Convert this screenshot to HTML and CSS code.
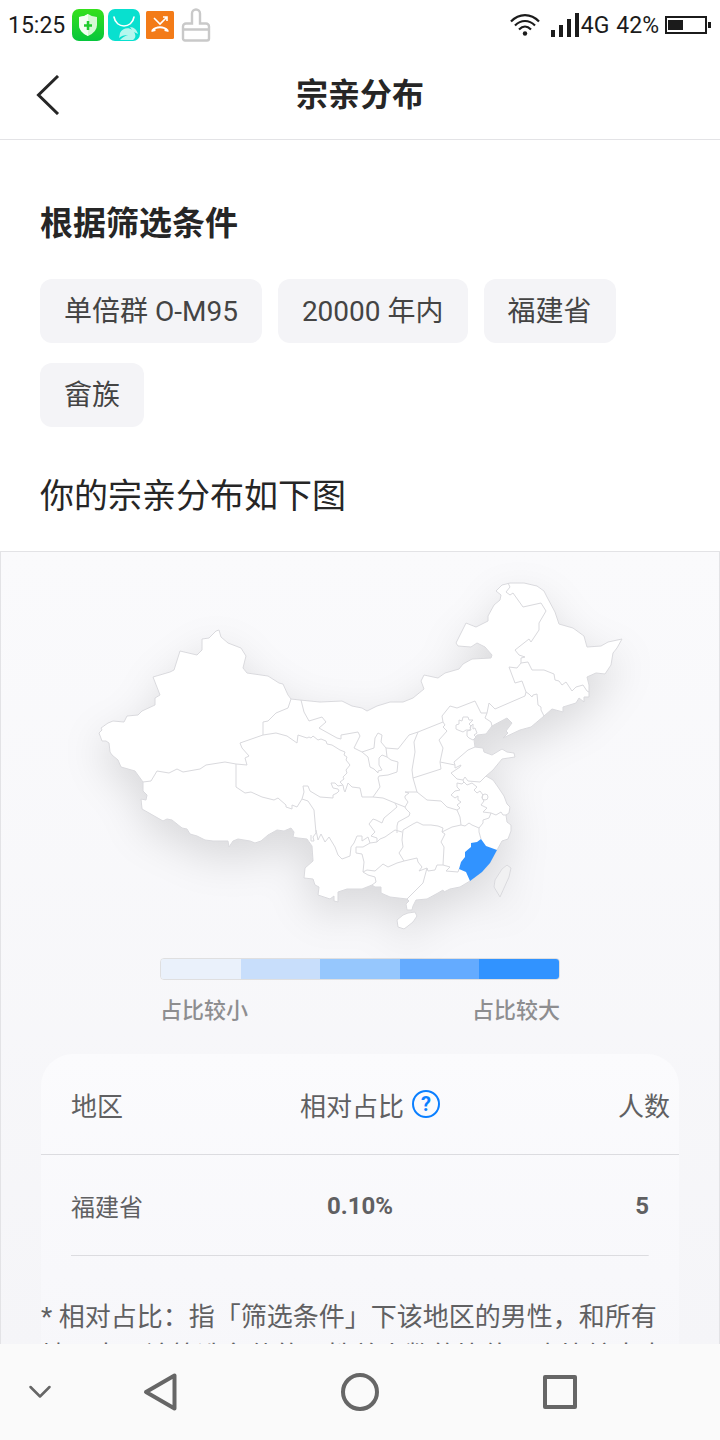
FILE: index.html
```
<!DOCTYPE html>
<html lang="zh-CN">
<head>
  <meta charset="UTF-8" />
  <meta name="viewport" content="width=device-width, initial-scale=1.0" />
  <title>宗亲分布</title>
  <link rel="stylesheet" href="styles.css">
</head>
<body>
  <div class="app">
    <div class="status-bar">
      <div class="status-group">
        <span class="status-time">15:25</span>
        <svg width="32" height="32" viewBox="0 0 32 32">
          <defs>
            <linearGradient id="green" x1="0" y1="0" x2="0" y2="1">
              <stop offset="0" stop-color="#35e01c" />
              <stop offset="1" stop-color="#06c63c" />
            </linearGradient>
          </defs>
          <rect width="32" height="32" rx="7" fill="url(#green)" />
          <path d="M7 8q5 0 9-3q4 3 9 3v8q0 7-9 11q-9-4-9-11z" fill="#d5f8d4" />
          <path d="M7 8q5 0 9-3v22q-9-4-9-11z" fill="#f4fff3" />
          <path d="M16 12v9M12 16.500h8" stroke="#1fcb2c" stroke-width="2.500" />
        </svg>
        <svg width="32" height="32" viewBox="0 0 32 32">
          <rect width="32" height="32" rx="7" fill="#08e0cf" />
          <path d="M6 8c2 12 18 12 20 0" fill="none" stroke="#fff" stroke-width="1.600" stroke-linecap="round" />
          <path d="M12 24c2-5 9-6 12-3l-2-3c4 0 7 3 8 7l-4-2c2 3 2 6-1 8H12c3-3 5-4 8-5c-4 0-7 1-9 3z" fill="#b5f7ee" />
        </svg>
        <svg width="32" height="32" viewBox="0 0 32 32">
          <rect x="2" y="2" width="28" height="28" rx="1.500" fill="#f37b18" />
          <path d="M10 9l6 6l7-7M19 8h4v4" fill="none" stroke="#fff" stroke-width="1.600" />
          <path d="M7.500 21c4-5 13-5 17 0v2l-4-1v-2c-3-1-6-1-9 0v2l-4 1z" fill="#fff" />
        </svg>
        <svg width="32" height="34" viewBox="0 0 32 34" fill="none" stroke="#c9c9c9" stroke-width="2.400">
          <path d="M12 15.500V5.500a4 4 0 0 1 8 0v10h6a3 3 0 0 1 3 3v12a2 2 0 0 1-2 2H5a2 2 0 0 1-2-2v-12a3 3 0 0 1 3-3zM3 21.500h26" />
        </svg>
      </div>
      <div class="status-group">
        <svg class="wifi" width="30" height="24" viewBox="0 0 30 24" fill="none" stroke="#1b1b1b" stroke-width="2.200">
          <path d="M1 8.500c8-8.500 20-8.500 28 0M5 12.500c6-6 14-6 20 0M9 16.500c4-4 8-4 12 0" />
          <circle cx="15" cy="20.500" r="2.200" fill="#1b1b1b" stroke="none" />
        </svg>
        <svg width="28" height="24" viewBox="0 0 28 24" fill="#1b1b1b">
          <path d="M0 17h4v7H0zM8 12h4v12H8zM16 6h4v18h-4zM24 0h4v24h-4z" />
        </svg>
        <span class="status-net">4G</span>
        <span class="status-percent">42%</span>
        <svg width="46" height="18" viewBox="0 0 46 18" fill="#1b1b1b">
          <rect x="1" y="1" width="40" height="16" fill="none" stroke="#1b1b1b" stroke-width="2" />
          <rect x="3" y="4" width="15" height="10" />
          <rect x="43" y="6" width="3" height="6" />
        </svg>
      </div>
    </div>

    <header class="header">
      <button class="back" type="button" aria-label="返回">
        <svg width="24" height="40" viewBox="0 0 24 40" fill="none" stroke="#262626" stroke-width="3">
          <path d="M22 1L2.500 20l19.500 19" />
        </svg>
      </button>
      <h1>宗亲分布</h1>
    </header>

    <main class="content">
      <section class="filters">
        <h2>根据筛选条件</h2>
        <ul class="chips">
          <li>单倍群 O-M95</li>
          <li>20000 年内</li>
          <li>福建省</li>
          <li>畲族</li>
        </ul>
        <p class="lead">你的宗亲分布如下图</p>
      </section>

      <section class="result">
        <svg class="map" viewBox="1 552 718 388" role="img" aria-label="宗亲分布地图">
          <g class="land">
            <!-- mainland -->
            <path d="M291 699L288 695 283 684 279 683 268 676 247 673 243 668 246 656 241 648 228 643 221 637 219 630 216 631 209 638 202 639 202 650 197 655 180 651 174 670 170 672 153 677 160 695 155 698 155 705 142 711 138 715 127 716 124 722 113 721 108 723 101 728 102 730 99 733 102 741 106 741 109 743 110 752 112 755 118 760 121 767 135 771 143 782 143 791 147 795 146 800 141 799 142 809 163 821 167 819 172 820 182 828 187 829 190 834 197 836 205 840 213 841 228 841 229 847 233 841 238 839 250 841 255 843 261 841 268 835 277 830 284 831 291 828 294 832 293 837 298 838 307 839 312 846 313 861 305 868 304 878 313 879 315 885 319 887 318 895 330 899 334 896 334 901 338 902 338 892 347 889 362 889 372 885 375 887 381 887 381 893 390 897 407 899 409 901 406 904 407 910 412 910 413 906 416 900 427 899 438 893 443 890 444 892 450 889 460 887 470 881 482 872 490 863 497 850 502 841 508 839 511 831 511 825 507 822 506 815 509 813 510 807 507 804 504 796 498 787 493 780 486 776 493 770 502 759 515 757 514 753 507 752 502 749 492 755 484 752 483 748 475 747 474 740 477 735 486 734 492 726 507 718 512 723 506 731 508 733 503 738 520 730 531 727 544 716 552 709 563 712 563 707 576 703 579 698 584 702 584 697 589 697 589 685 587 677 596 673 605 674 611 665 613 653 617 648 622 639 608 642 601 646 587 647 584 636 573 628 559 624 555 612 547 597 544 591 537 586 524 583 510 583 502 585 496 591 501 595 500 600 494 605 488 616 488 621 476 627 466 623 456 643 458 646 471 647 477 643 485 647 492 655 491 658 472 659 463 664 459 669 445 673 438 678 424 675 421 681 424 689 413 698 403 702 390 702 377 706 367 711 362 708 352 706 342 701 320 702 300 700z" />
            <!-- hainan, taiwan -->
            <path d="M415 912L417 916 413 922 408 926 404 929 398 927 397 920 403 915 408 913z" />
            <path class="empty" d="M507 865L511 868 509 877 500 897 494 887 495 880 502 869z" />
          </g>
          <g class="borders">
            <path d="M291 699L288 708 276 713 268 721 263 722 263 735 240 743 242 748 249 756 245 758 247 765 236 764 225 762 206 765 200 769 183 772 177 769 169 773 157 771 151 781 143 782" />
            <path d="M236 764L236 787 245 793 251 792 262 797 274 800 278 798 286 805 286 807 292 809 292 805 297 807 302 799" />
            <path d="M263 735L276 733 287 736 297 743 298 735 307 738 309 737 311 738 313 736 318 740 321 739 326 741 327 744 332 745 340 750 345 752 344 755 347 757 346 760 350 765 346 770 347 773 343 777 344 779 340 782 343 785 338 786 335 783 331 783 333 788 338 789 339 791 337 793 333 795 333 798 320 797 310 791 308 786 303 786 304 792 302 799 308 801 314 810 316 833 313 837 314 841 311 841 311 835" />
            <path d="M316 830L318 840 321 834 325 842 329 837 335 847 338 855 342 859 350 856 351 847 354 843 357 836 362 836 362 841 368 837 370 843 377 842 377 838 371 836 375 832 369 824 373 819 376 820 382 823 384 818 390 813 397 807 395 803 405 807 406 809 410 813 409 816 398 822 397 826 397 833" />
            <path d="M370 843L363 847 356 847 356 853 362 854 364 862 363 872 368 875 375 877 376 882 372 885" />
            <path d="M363 872L367 870 375 871 383 864 388 867 397 863 404 861 399 853 403 847 402 840 403 830 413 824 417 822 423 825 431 825 438 826 443 828 442 832 445 834 441 842 444 847 443 865" />
            <path d="M377 842L380 839 385 837 395 830 402 832" />
            <path d="M404 861L417 858 418 862 422 867 419 871 427 868 428 871 435 870 437 865 443 865 450 867 446 871 458 872 459 869" />
            <path d="M427 868L423 883 413 893 407 899" />
            <path d="M405 807L408 802 405 798 405 796 409 793 405 792 417 792 427 800 441 801 447 807 457 810 460 817 461 825" />
            <path d="M442 832L452 827 461 825 465 826 469 823 472 825 479 828" />
            <path d="M481 839L479 832 479 828 483 823 483 820 489 818 491 813 496 815 501 812 503 815 506 815" />
            <path d="M457 810L460 808 457 805 461 802 458 800 458 796 455 798 451 795 455 791 460 790 457 787 457 783 462 784 464 782 467 785 472 783 477 787 474 790 477 793 480 791 483 795 482 798 484 801 481 805 487 808 483 812 491 813" />
            <circle cx="485" cy="797" r="3" />
            <path d="M457 779L451 773 460 767 461 765 455 768 455 765 454 762 468 750 475 747" />
            <path d="M457 779L463 780 465 777 468 781 480 782 486 776M463 780L464 783" />
            <path d="M443 722L445 725 443 727 447 731 439 740 443 748 440 762 455 765M440 762L441 769 413 778" />
            <path d="M418 732L414 742 415 752 412 770 413 778 417 792" />
            <path d="M301 700L304 712 309 721 322 717 326 722 319 728 337 738 341 739 341 735 358 732 360 736 354 748 362 752 374 748 375 738 378 733 382 735 381 742 386 748 398 749 409 735 418 732 443 722 442 716 450 706 457 708 475 701 481 713 487 713 489 703 495 709 525 696 526 692 522 681 515 683 509 667 517 668 521 663 521 658 525 657 519 655 515 650 529 639 531 642 539 630 539 623 546 611 541 603 523 607 513 593 510 595 506 592 510 587 508 583" />
            <path d="M362 752L368 757 370 767 374 769 378 773 378 771 382 770 379 765 379 758 382 755 387 757 386 748M387 757L391 760 398 762 397 772 388 775 379 776 378 778 380 787 373 797" />
            <path d="M340 782L343 785 344 790 345 792 348 783 352 787 360 788 362 797 373 797 383 798 395 803" />
            <path d="M487 713L485 718 491 722 492 726" />
            <path d="M521 663L528 662 532 670 544 670 554 674 555 680 559 681 562 685 566 682 572 691 576 687 583 685 587 691 589 692" />
            <path d="M526 692L529 694 532 697 533 695 537 694 538 705 541 707 541 710 544 716" />
            <path d="M456 725L459 724 459 720 462 721 463 717 468 717 469 720 473 720 469 724 471 726 470 730 466 730 463 732 458 730 456 729z" />
            <path d="M467 731L471 730 470 727 473 724 473 729 475 728 477 733 474 735 476 737 473 740 469 738 467 736z" />
          </g>
          <path class="active" d="M481 839L486 846 497 850 490 863 482 872 470 881 466 872 459 869 461 862 465 857 465 852 471 847 471 843 477 842z" />
        </svg>

        <div class="legend">
          <div class="legend-bar">
            <span></span><span></span><span></span><span></span><span></span>
          </div>
          <div class="legend-labels">
            <span>占比较小</span>
            <span>占比较大</span>
          </div>
        </div>

        <div class="card">
          <table>
            <thead>
              <tr>
                <th>地区</th>
                <th>
                  <div class="ratio">
                    相对占比
                    <button class="help" type="button" aria-label="说明">?</button>
                  </div>
                </th>
                <th>人数</th>
              </tr>
            </thead>
            <tbody>
              <tr>
                <td>福建省</td>
                <td>0.10%</td>
                <td>5</td>
              </tr>
            </tbody>
          </table>
          <p class="note">* 相对占比：指「筛选条件」下该地区的男性，和所有地区中，该筛选条件的男性总人数的比值，占比较大表示在该地区较为集中。</p>
        </div>
      </section>
    </main>

    <nav class="nav-bar">
      <button class="nav-hide" type="button" aria-label="收起">
        <svg width="24" height="14" viewBox="0 0 24 14"><path d="M2.500 2L12 11.500 21.500 2" stroke-width="2.500" /></svg>
      </button>
      <button type="button" aria-label="后退">
        <svg width="34" height="40" viewBox="0 0 34 40"><path d="M31.500 3.500v33L3 20z" stroke-width="4" /></svg>
      </button>
      <button type="button" aria-label="主页">
        <svg width="40" height="40" viewBox="0 0 40 40"><circle cx="20" cy="20" r="17" stroke-width="4" /></svg>
      </button>
      <button type="button" aria-label="最近任务">
        <svg width="40" height="40" viewBox="0 0 40 40"><rect x="5" y="5" width="30" height="30" stroke-width="4" /></svg>
      </button>
    </nav>
  </div>
</body>
</html>
```
FILE: styles.css
```
* {
  box-sizing: border-box;
}

body {
  margin: 0;
  background: #fff;
  font-family: Roboto, 'Noto Sans CJK SC', sans-serif;
  color: #262626;
}

h1, h2, p, ul {
  margin: 0;
  padding: 0;
}

button {
  padding: 0;
  border: 0;
  background: none;
  font-family: inherit;
  cursor: pointer;
}

svg {
  display: block;
}

.app {
  display: flex;
  flex-direction: column;
  height: 100vh;
}

/* Status bar */
.status-bar {
  display: flex;
  justify-content: space-between;
  align-items: center;
  flex: none;
  height: 50px;
  padding: 0 9px 0 8px;
  font-size: 23px;
  color: #1b1b1b;
}

.status-group {
  display: flex;
  align-items: center;
  gap: 4px;
}

.status-time {
  margin-right: 3px;
}

.wifi {
  margin-right: 7px;
}

.status-net {
  margin-left: -2px;
}

.status-percent {
  margin: 0 2px 0 3px;
}

/* Header */
.header {
  display: grid;
  grid-template-columns: 1fr auto 1fr;
  align-items: center;
  flex: none;
  height: 90px;
  padding: 0 36px;
  border-bottom: 1px solid #e3e3e6;
}

.back {
  justify-self: start;
}

.header h1 {
  font-size: 32px;
  line-height: 48px;
  font-weight: 700;
}

.content {
  flex: 1;
  min-height: 0;
  overflow: hidden;
}

/* Filters */
.filters {
  padding: 58px 40px 29px;
}

.filters h2 {
  font-size: 33px;
  line-height: 52px;
  font-weight: 700;
}

.chips {
  display: flex;
  flex-wrap: wrap;
  gap: 20px 16px;
  margin: 29px 0 43px;
  list-style: none;
}

.chips li {
  padding: 2px 24px 0;
  border-radius: 12px;
  background: #f4f4f7;
  font-size: 28px;
  line-height: 62px;
  color: #444;
}

.lead {
  font-size: 34px;
  line-height: 52px;
}

/* Map and legend */
.result {
  border: 1px solid #e3e3e6;
  background: linear-gradient(#fafafc, #f5f5f8 800px);
}

.map {
  width: 100%;
  height: auto;
  overflow: visible;
}

.land {
  fill: #fff;
  stroke: #d9d9dd;
  stroke-width: 1;
  stroke-linejoin: round;
  filter: drop-shadow(0 16px 20px rgba(0, 0, 0, 0.12));
}

.land .empty {
  fill: #f1f1f2;
}

.borders {
  fill: none;
  stroke: #d9d9dd;
  stroke-width: 1;
  stroke-linejoin: round;
}

.active {
  fill: #3193ff;
}

.legend {
  width: 400px;
  max-width: 80%;
  margin: 18px auto 27px;
}

.legend-bar {
  display: flex;
  height: 22px;
  border: 1px solid #dfdfe0;
  border-radius: 4px;
  overflow: hidden;
}

.legend-bar span {
  flex: 1;
}

.legend-bar span:nth-child(1) { background: #eaf1fb; }
.legend-bar span:nth-child(2) { background: #c8defb; }
.legend-bar span:nth-child(3) { background: #96c7fd; }
.legend-bar span:nth-child(4) { background: #64abff; }
.legend-bar span:nth-child(5) { background: #3193ff; }

.legend-labels {
  display: flex;
  justify-content: space-between;
  margin-top: 15px;
  font-size: 22px;
  line-height: 32px;
  font-weight: 500;
  color: #8e8e90;
}

/* Result table */
.card {
  margin: 0 40px;
  border-radius: 32px 32px 0 0;
  background: linear-gradient(#fbfbfd, #f8f8fb 220px, #f6f6f9);
  color: #606062;
}

table {
  width: 100%;
  table-layout: fixed;
  border-collapse: separate;
  border-spacing: 0;
}

th, td {
  height: 101px;
  padding: 0;
}

th {
  border-bottom: 1px solid #dcdce0;
  font-size: 26px;
  font-weight: 400;
}

td {
  font-size: 24px;
  font-weight: 700;
  text-align: center;
}

th:first-child,
td:first-child {
  padding-left: 30px;
  font-weight: 400;
  text-align: left;
}

th:last-child {
  padding-right: 9px;
  text-align: right;
}

td:last-child {
  padding-right: 30px;
  text-align: right;
}

tbody tr {
  background: linear-gradient(#dcdce0, #dcdce0) bottom / calc(100% - 60px) 1px no-repeat;
}

.ratio {
  display: flex;
  justify-content: center;
  align-items: center;
  gap: 8px;
  padding-left: 20px;
}

.help {
  width: 28px;
  height: 28px;
  border: 2px solid #0a7fff;
  border-radius: 50%;
  font-size: 20px;
  line-height: 24px;
  font-weight: 700;
  color: #0a7fff;
}

.note {
  padding: 42px 0;
  font-size: 26px;
  line-height: 39px;
}

/* Bottom navigation */
.nav-bar {
  display: grid;
  grid-template-columns: 1fr 2fr 3fr 2fr 1fr;
  align-items: center;
  justify-items: center;
  flex: none;
  height: 96px;
  background: #fafafa;
}

.nav-bar svg {
  fill: none;
  stroke: #666;
  stroke-linecap: round;
  stroke-linejoin: round;
}
```
